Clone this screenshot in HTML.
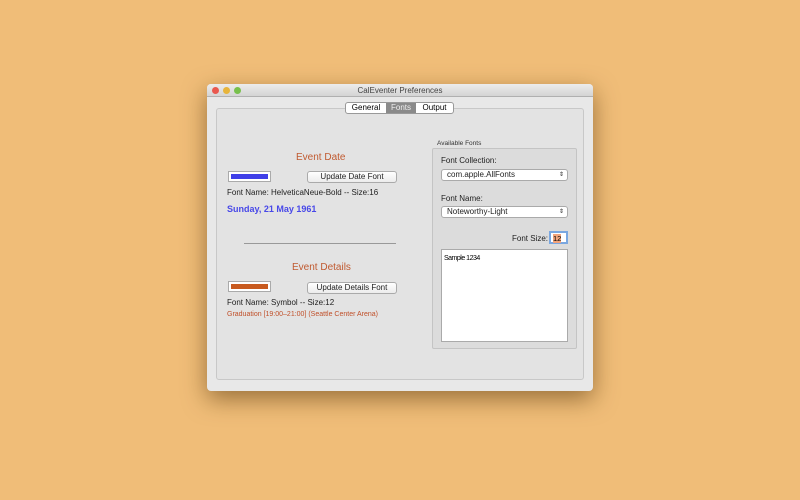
<!DOCTYPE html>
<html><head><style>
*{margin:0;padding:0;box-sizing:border-box}
body{width:800px;height:500px;background:#f0bd78;font-family:"Liberation Sans",sans-serif;position:relative;overflow:hidden}
.a{position:absolute}
.win{left:207px;top:84px;width:386px;height:307px;background:#e8e8e8;border-radius:4px;box-shadow:0 8px 24px rgba(80,50,10,.55);overflow:hidden}
.tb{left:0;top:0;width:386px;height:13px;background:linear-gradient(#ececec,#d4d4d4);border-bottom:1px solid #b0b0b0;font-size:8px;color:#444;text-align:center;line-height:13px}
.dot{top:3px;width:7px;height:7px;border-radius:50%}
.btn{background:linear-gradient(#fff,#ececec);border:1px solid #aaa;border-radius:3px;font-size:8px;text-align:center;color:#222}
.t{font-size:8px;color:#222;white-space:nowrap}
.sel{background:#fff;border:1px solid #aaa;border-radius:3px;font-size:8px;padding-left:5px;line-height:10px;color:#222}
</style></head><body>
<div class="a win">
 <div class="a tb">CalEventer Preferences</div>
 <div class="a dot" style="left:5px;background:#e9584f"></div>
 <div class="a dot" style="left:16px;background:#e7b43b"></div>
 <div class="a dot" style="left:27px;background:#78c04c"></div>
 <div class="a" style="left:9px;top:24px;width:368px;height:272px;border:1px solid #c8c8c8;border-radius:3px;background:#e3e3e3"></div>
 <div class="a" style="left:138px;top:18px;width:109px;height:12px;border:1px solid #999;border-radius:3px;background:#fff;font-size:8px;display:flex;line-height:10px">
  <div style="width:40px;text-align:center">General</div>
  <div style="width:30px;text-align:center;background:#8a8a8a;color:#eee">Fonts</div>
  <div style="flex:1;text-align:center">Output</div>
 </div>
 <div class="a" style="left:89px;top:68px;font-size:10px;color:#c05a30">Event Date</div>
 <div class="a" style="left:21px;top:87px;width:43px;height:11px;border:1px solid #aaa;background:#fff;padding:2px"><div style="background:#3f3fe8;height:100%"></div></div>
 <div class="a btn" style="left:100px;top:87px;width:90px;height:12px;line-height:10px">Update Date Font</div>
 <div class="a t" style="left:20px;top:104px">Font Name: HelveticaNeue-Bold -- Size:16</div>
 <div class="a" style="left:20px;top:120px;font-size:9px;font-weight:bold;color:#4848e8">Sunday, 21 May 1961</div>
 <div class="a" style="left:37px;top:159px;width:152px;height:1px;background:#999"></div>
 <div class="a" style="left:85px;top:178px;font-size:10px;color:#c05a30">Event Details</div>
 <div class="a" style="left:21px;top:197px;width:43px;height:11px;border:1px solid #aaa;background:#fff;padding:2px"><div style="background:#c85a1f;height:100%"></div></div>
 <div class="a btn" style="left:100px;top:198px;width:90px;height:12px;line-height:10px">Update Details Font</div>
 <div class="a t" style="left:20px;top:214px">Font Name: Symbol -- Size:12</div>
 <div class="a t" style="left:20px;top:227px;font-size:7px;color:#c0502a">Graduation [19:00–21:00] (Seattle Center Arena)</div>
 <div class="a" style="left:230px;top:56px;font-size:6.5px;color:#333">Available Fonts</div>
 <div class="a" style="left:225px;top:64px;width:145px;height:201px;border:1px solid #c4c4c4;background:#dcdcdc;border-radius:2px"></div>
 <div class="a t" style="left:234px;top:72px">Font Collection:</div>
 <div class="a sel" style="left:234px;top:85px;width:127px;height:12px">com.apple.AllFonts<span style="float:right;margin-right:3px;font-size:6px">⇕</span></div>
 <div class="a t" style="left:234px;top:110px">Font Name:</div>
 <div class="a sel" style="left:234px;top:122px;width:127px;height:12px">Noteworthy-Light<span style="float:right;margin-right:3px;font-size:6px">⇕</span></div>
 <div class="a t" style="left:305px;top:150px">Font Size:</div>
 <div class="a" style="left:342px;top:147px;width:19px;height:13px;border:2px solid #7aa7e0;background:#fff;font-size:7.5px;padding:1px 2px"><span style="background:#f2a37a">12</span></div>
 <div class="a" style="left:234px;top:165px;width:127px;height:93px;background:#fff;border:1px solid #aaa;font-size:7px;padding:5px 2px;letter-spacing:-.5px">Sample 1234</div>
</div>
</body></html>
